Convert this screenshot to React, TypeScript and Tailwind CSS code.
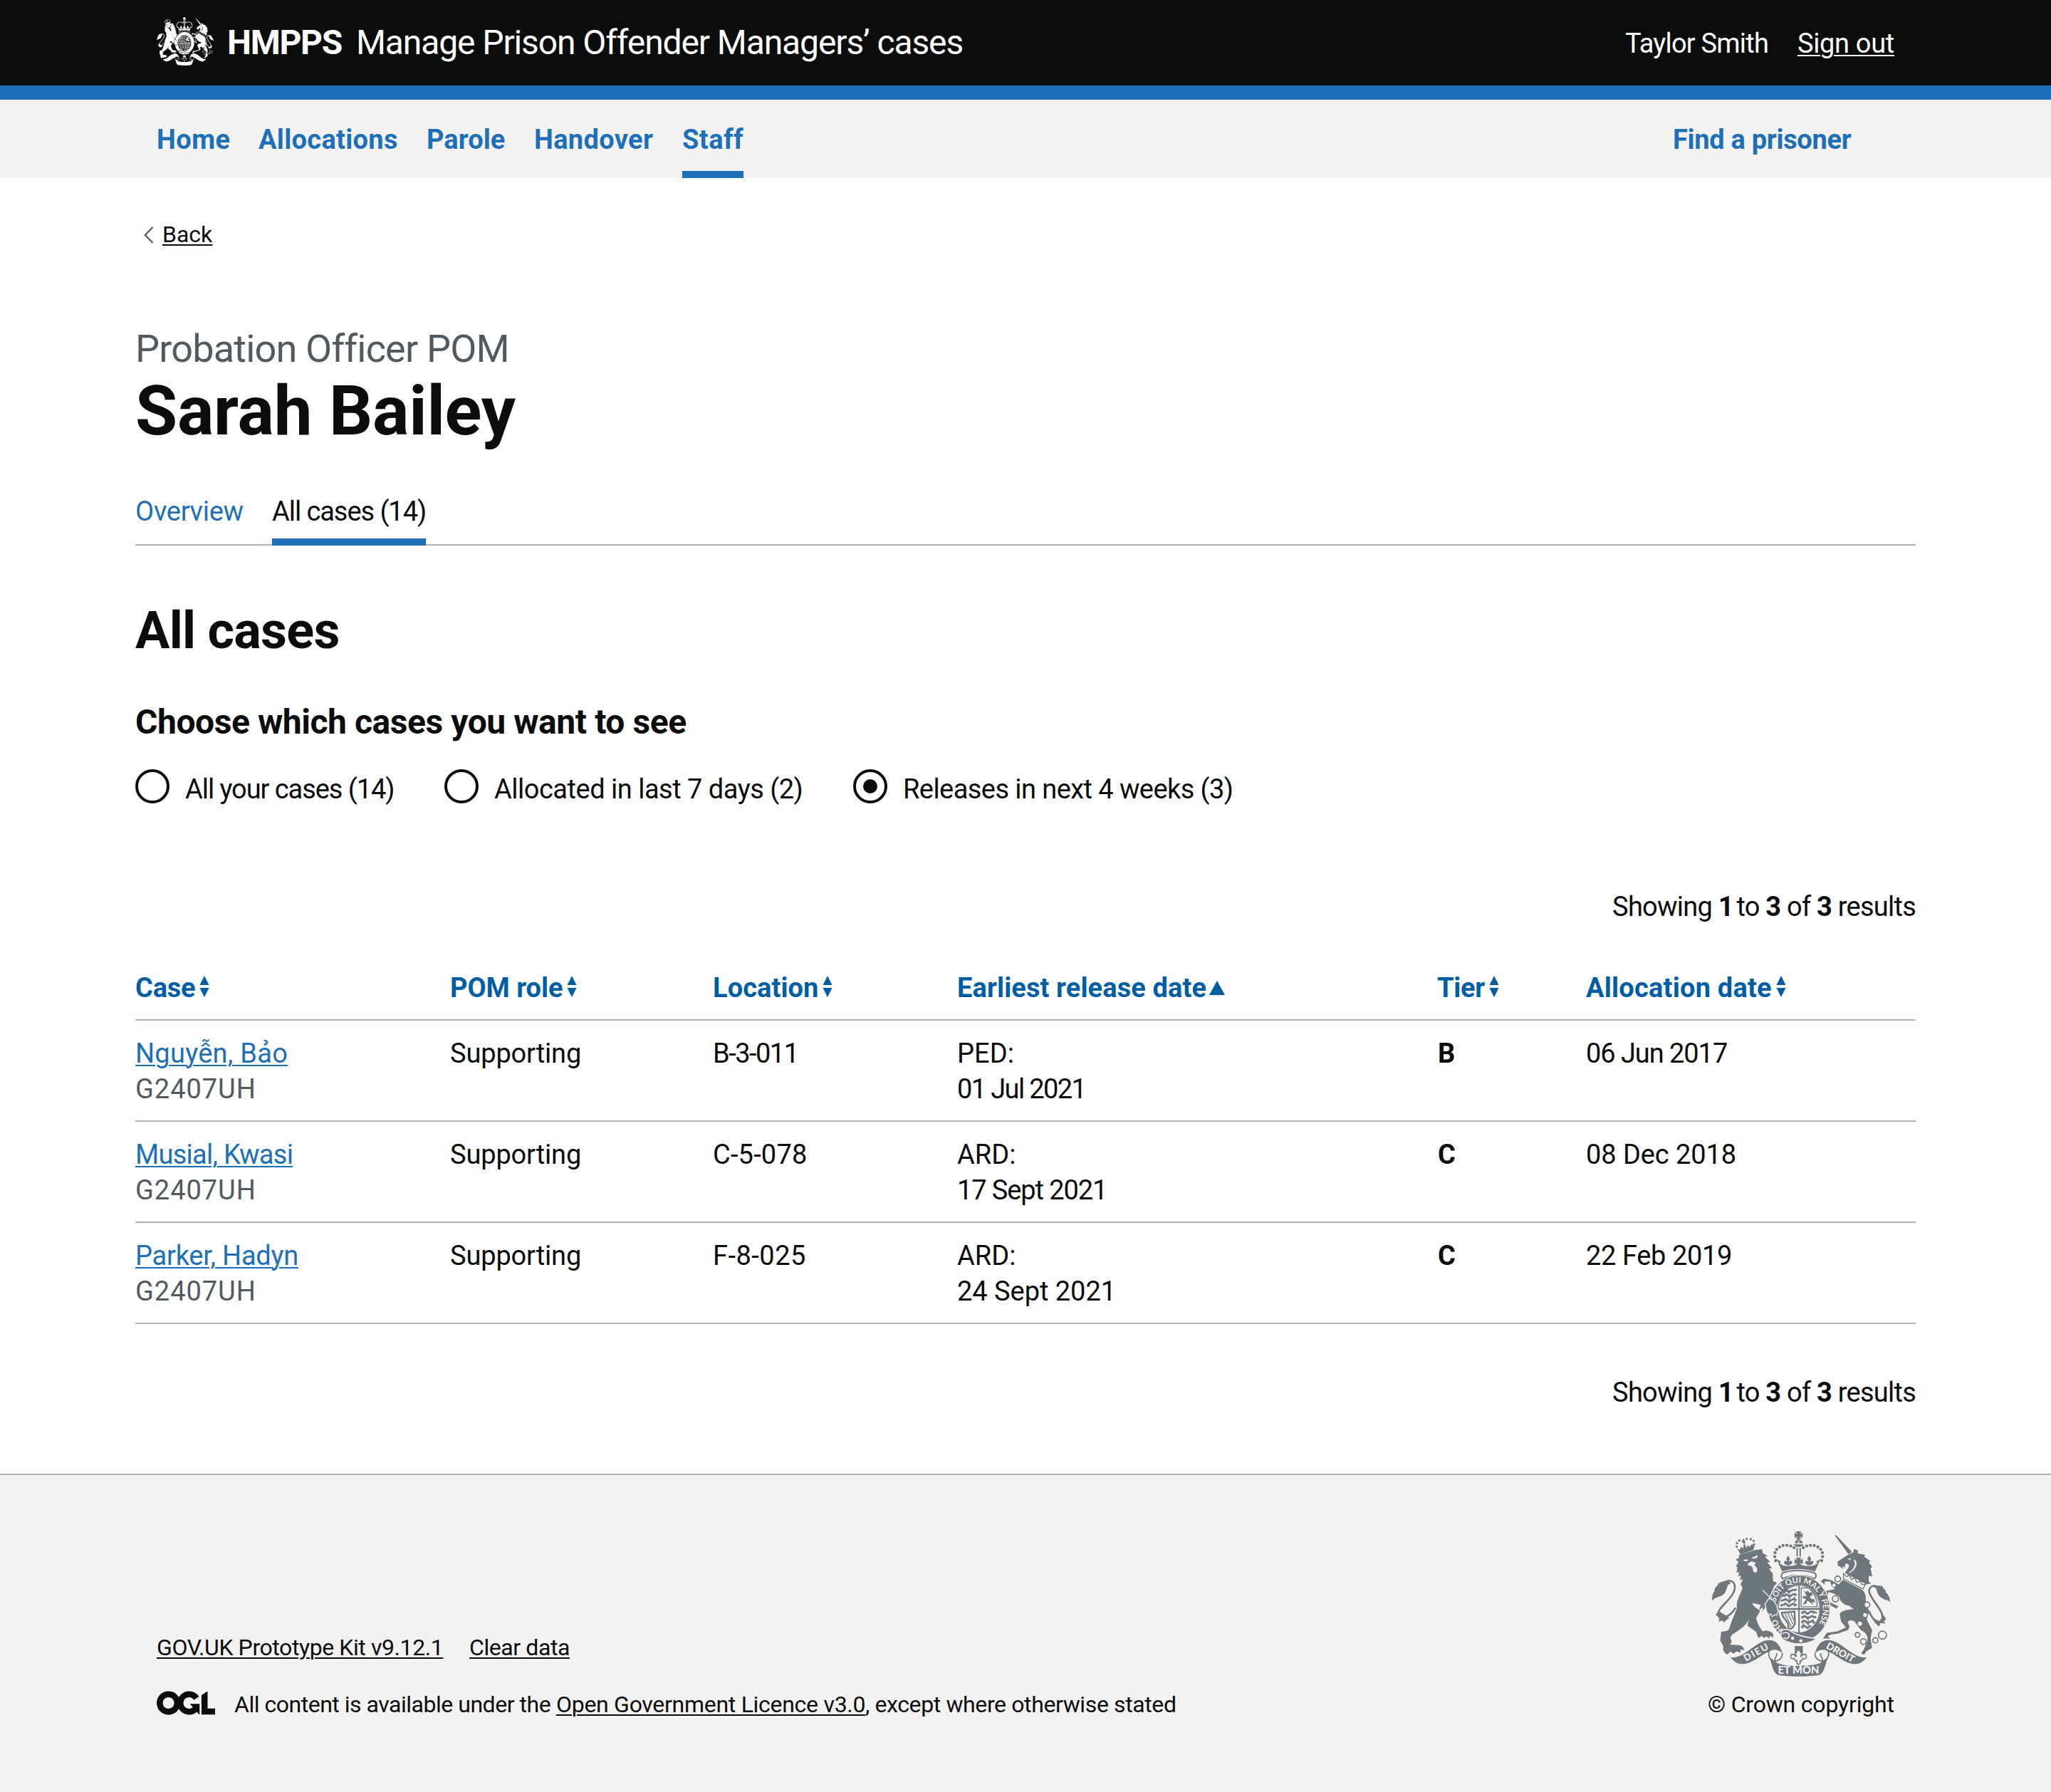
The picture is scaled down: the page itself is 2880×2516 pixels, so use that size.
import React from 'react';

function RoyalArms({ fg, bg, motto, className }: { fg: string; bg: string; motto: boolean; className: string }) {
  const archBeads = [
    [341, 184], [337, 167], [338, 150], [345, 136], [357, 126], [372, 120], [388, 119], [404, 122], [418, 129],
  ];
  const lionCrownBeads = [[177, 125], [178, 110], [188, 99], [219, 92], [236, 93], [248, 100], [250, 115]];
  const bezants = [[602, 261, 12], [592, 345, 13], [725, 370, 12], [685, 497, 10], [710, 525, 12], [760, 520, 11], [790, 498, 17]];
  return (
    <svg viewBox="70 57 755 616" preserveAspectRatio="none" className={className} fill={fg}>
      {/* central crown */}
      <path d="M425 60H449L442 72L454 65V88L442 81L448 92H426L432 81L420 88V65L432 72Z" />
      <path d="M433 92H441V98H433ZM422 110C422 100 430 96 435 95V110ZM440 95C448 97 455 102 455 110H440ZM417 115H458C454 130 421 130 417 115Z" />
      {archBeads.map(([x, y]) => (
        <g key={`${x}-${y}`}>
          <circle cx={x} cy={y} r="6.5" />
          <circle cx={875 - x} cy={y} r="6.5" />
        </g>
      ))}
      <path d="M428 130H434V166H428ZM441 130H447V166H441Z" />
      <path d="M426 171H449L442 183L455 176V198L442 192L450 204H425L432 192L420 198V176L432 183Z" />
      <path d="M393 162L401 176L396 188L408 184L411 194L400 203H386L375 194L379 184L390 188L385 176ZM482 162L490 176L485 188L497 184L500 194L489 203H475L464 194L468 184L479 188L474 176Z" />
      <path d="M346 178L362 186L358 195L372 204C385 208 400 205 412 206C430 200 445 200 462 206C480 205 490 208 502 204L516 195L512 186L528 178L517 206L506 230C470 216 404 216 368 230L357 206Z" />
      <path d="M370 236C405 222 470 222 505 236C515 245 510 256 503 260C465 242 410 242 371 260C364 256 361 245 370 236Z" fill={bg} stroke={fg} strokeWidth="6" />

      {/* lion */}
      {lionCrownBeads.map(([x, y]) => (
        <circle key={`${x}-${y}`} cx={x} cy={y} r="5" />
      ))}
      <path d="M179 132L190 138L196 124L204 134L207 112L198 104L205 89L213 103L210 112L218 130L224 118L230 127L240 114L252 122L246 140L192 156Z" />
      <path d="M189 158L258 138L285 136L286 152L306 163L296 168L317 188L306 192L325 215L313 218L328 238L330 270L347 276L334 292L322 322L313 346L330 352L343 374L349 396L344 412L326 418L322 404L316 414L306 402L301 378L284 398L288 380L270 392L278 370L242 362C246 378 262 384 276 396L259 425C262 446 270 460 286 482C300 476 322 480 331 494L330 508L316 500L316 512L300 503L292 510L282 502L268 510L258 484L222 458L228 430C222 452 192 474 158 496L150 508L156 526L148 538L180 540C196 538 208 548 208 562L194 558L192 572L176 566L164 576L150 568L138 580C122 572 118 562 121 546L107 520L112 484C126 480 140 484 145 470L160 428L178 384C172 352 196 322 201 298L193 282L203 262L190 266L195 246L183 250L187 232L176 234L180 212L174 208L184 190L172 176L184 176Z" />
      <path d="M204 182L220 177L226 184L211 187ZM240 172L266 160L262 172L246 176ZM228 192L240 187L258 193L250 202L244 200C262 208 268 222 260 232C252 238 244 230 244 214C240 204 232 206 222 202Z" fill={bg} />
      <path d="M286 308L314 336L338 354" stroke={bg} strokeWidth="4" fill="none" />
      <path d="M172 382C152 420 112 434 100 412C90 382 172 342 169 292C166 266 140 264 128 276" fill="none" stroke={fg} strokeWidth="8" />
      <path d="M152 280C136 262 118 272 98 280C102 290 78 298 84 312C72 326 74 340 72 354C82 340 92 342 106 334C128 330 134 304 140 286ZM88 410L104 398L146 424L122 444L116 436L100 440L104 428Z" />

      {/* unicorn */}
      <path d="M588 75L597 78L662 147L647 157Z" />
      <path d="M601 188L626 172L640 162L668 149L670 134L686 140L686 153L720 160L712 166L740 186L732 190L747 210L740 216L748 252L738 246L732 252L732 270L742 280L722 284L632 236L644 218C654 204 648 194 634 196L632 214L622 206L625 220L610 208L602 206Z" />
      <path d="M642 177L658 172L654 180ZM668 180C682 196 668 224 648 234L652 237C678 222 688 196 676 182Z" fill={bg} />
      <path d="M626 238L640 252L650 244L660 264L673 256L682 276L697 270L703 284L718 284L708 304L626 260Z" fill={bg} stroke={fg} strokeWidth="4" />
      <path d="M624 264L706 308C728 330 716 352 722 364L734 398L724 432L747 478L740 510L746 552L722 566L714 580L700 576L712 558L724 528C736 500 712 482 700 478L672 440C654 430 634 436 652 460L646 476L600 492L572 496L560 504L572 512L540 512L556 488L600 482L636 466L616 440L610 408C616 396 640 390 668 388L650 374C626 372 610 354 608 336L584 322L562 316L560 344L574 362L606 376L596 386L574 374L548 356L552 312L590 304L576 290L570 272L546 272L548 286L530 270L544 260L574 266L606 284Z" />
      {bezants.map(([x, y, r]) => (
        <circle key={`${x}-${y}`} cx={x} cy={y} r={r} fill={bg} stroke={fg} strokeWidth="5" />
      ))}
      <circle cx="586" cy="288" r="7" fill={bg} />
      <circle cx="717" cy="413" r="8" fill={bg} />
      <circle cx="695" cy="450" r="9" fill={bg} />
      <path d="M734 396C746 436 786 460 791 430C792 384 734 344 734 312C735 292 752 286 768 294" fill="none" stroke={fg} strokeWidth="8" />
      <path d="M750 292C776 284 788 294 790 290C790 302 808 308 804 318C818 330 822 344 822 360C812 346 800 352 788 342C768 332 768 310 762 300ZM748 430L778 438L794 412L806 432L796 438L802 450L782 446L776 462L760 448Z" />

      {/* garter and shield */}
      <ellipse cx="439" cy="388" rx="133" ry="144" fill={bg} />
      <ellipse cx="439" cy="385" rx="109" ry="119" fill="none" stroke={fg} strokeWidth="38" />
      <ellipse cx="439" cy="388" rx="88" ry="100" fill={bg} stroke={fg} strokeWidth="4" />
      <path d="M436 290H442V488H436ZM352 384H527V391H352Z" />
      <path d="M374 318L388 308L396 318L410 308L430 306M366 334L386 326L400 336L412 326L430 328M362 354L384 346L396 356L414 346L430 350M360 374L384 366L396 376L414 366L430 372" fill="none" stroke={fg} strokeWidth="8" />
      <path d="M380 312V378M398 308V378M420 304V378" fill="none" stroke={fg} strokeWidth="5" strokeDasharray="9 7" />
      <path d="M448 299H478C502 314 514 344 516 378H448Z" fill="none" stroke={fg} strokeWidth="4" />
      <path d="M458 308L468 316L476 310L484 320L494 316L496 330L486 334L488 344L504 348L506 362L494 356L498 370L484 358L474 352L470 364L456 370L462 356L470 346L454 342L456 332L472 336L466 324Z" />
      <path d="M366 404L420 398L422 448C414 470 404 474 394 470C400 440 370 430 366 404Z" fill="none" stroke={fg} strokeWidth="7" />
      <path d="M380 408L406 462M392 406L414 452M404 404L418 436" stroke={fg} strokeWidth="4" />
      <path d="M448 404L462 398L474 408L490 398L514 404M448 424L464 418L476 428L492 418L512 424M448 444L464 438L476 448L492 438L506 446M448 464L462 458L474 468L490 458" fill="none" stroke={fg} strokeWidth="8" />
      <path d="M456 400V470M478 402V470M498 398V450" fill="none" stroke={fg} strokeWidth="5" strokeDasharray="9 7" />
      <path id={motto ? 'garter-path' : undefined} d="M373 473A101 111 0 1 1 503 473" fill="none" />
      {motto && (
        <text dx="0 0 62" fill={bg} fontFamily="Lato, sans-serif" fontWeight="700" fontSize="34">
          <textPath href="#garter-path">HO SOIT QUI MAL Y PENSE</textPath>
        </text>
      )}
      <path d="M296 366L313 342L332 352L345 374L351 396L346 414L336 412L326 420L320 408L312 414L302 398Z" stroke={bg} strokeWidth="4" />
      <path d="M364 486C364 474 390 468 404 480C420 494 460 508 514 512C490 532 430 548 376 520C362 512 360 496 364 486Z" stroke={bg} strokeWidth="5" />
      <path d="M370 492C382 482 396 488 398 498C396 514 382 516 374 508" fill="none" stroke={bg} strokeWidth="5" />
      <circle cx="412" cy="511" r="7" fill={bg} />
      <circle cx="447" cy="522" r="7" fill={bg} />

      {/* pendant and ribbon */}
      <path d="M421 544H455V574H421Z" />
      <path d="M437 556L450 576L446 590C456 574 470 576 470 588C470 598 460 600 456 596L450 606H444V616L437 622L430 616V606H424L418 596C412 600 404 598 404 588C404 576 418 574 428 590L424 576Z" fill={bg} stroke={fg} strokeWidth="5" />
      <path d="M150 592C204 598 240 540 296 521C334 512 356 530 369 574C350 556 326 556 314 568C284 576 244 620 200 620C180 620 166 610 150 592Z" />
      <path d="M725 592C671 598 635 540 579 521C541 512 519 530 506 574C525 556 549 556 561 568C591 576 631 620 675 620C695 620 709 610 725 592Z" />
      <path d="M313 568C306 590 322 604 344 612M368 572C372 590 358 608 338 606C334 590 350 590 344 574M562 568C569 590 553 604 531 612M507 572C503 590 517 608 537 606C541 590 525 590 531 574" fill="none" stroke={fg} strokeWidth="5" />
      <path d="M312 590C330 616 370 628 437 628C504 628 545 616 563 590C548 614 550 656 522 667C470 674 405 674 353 667C325 656 327 614 312 590Z" />
      {motto && (
        <g fill={bg} fontFamily="Lato, sans-serif" fontWeight="900" fontSize="40" textAnchor="middle">
          <text transform="translate(264 583) rotate(-29)" textLength="112">DIEU</text>
          <text x="437" y="662" fontSize="44" textLength="174" lengthAdjust="spacingAndGlyphs">ET MON</text>
          <text transform="translate(607 583) rotate(29)" textLength="130" lengthAdjust="spacingAndGlyphs">DROIT</text>
        </g>
      )}
    </svg>
  );
}

function SortIcon({ direction }: { direction: 'none' | 'ascending' }) {
  if (direction === 'ascending') {
    return (
      <svg viewBox="0 0 22 20" className="mt-[15px] ml-[4px] h-[20px] w-[22px] shrink-0" fill="#005ea5">
        <path d="M11 0L22 20H0Z" />
      </svg>
    );
  }
  return (
    <svg viewBox="0 0 14 30" className="mt-[8px] ml-[6px] h-[30px] w-[14px] shrink-0" fill="#005ea5">
      <path d="M7 0L13.5 13H0.5ZM7 30L13.5 17H0.5Z" />
    </svg>
  );
}

const navItems = [
  { label: 'Home', size: 'w-[103px] tracking-[0.012em]' },
  { label: 'Allocations', size: 'w-[196px] tracking-[0.008em]' },
  { label: 'Parole', size: 'w-[111px] tracking-[0.002em]' },
  { label: 'Handover', size: 'w-[168px] tracking-[0.009em]' },
  { label: 'Staff', size: 'w-[86px] tracking-[0.012em]', current: true },
];

const filters = [
  { label: 'All your cases (14)', size: 'w-[364px] mr-[70px] tracking-[-0.028em]' },
  { label: 'Allocated in last 7 days (2)', size: 'w-[504px] mr-[70px] tracking-[-0.013em]' },
  { label: 'Releases in next 4 weeks (3)', size: 'w-[540px] tracking-[-0.015em]', checked: true },
];

const columns = [
  { label: 'Case', tracking: 'tracking-[-0.006em]' },
  { label: 'POM role', tracking: 'tracking-[-0.001em]' },
  { label: 'Location', tracking: 'tracking-[0.002em]' },
  { label: 'Earliest release date', tracking: 'tracking-[0.003em]', ascending: true },
  { label: 'Tier', tracking: 'tracking-[-0.008em]' },
  { label: 'Allocation date', tracking: 'tracking-[0.006em]' },
];

const rows = [
  {
    name: 'Nguyễn, Bảo', nameTracking: 'tracking-[0.007em]', location: 'B-3-011', locTracking: 'tracking-[-0.04em]',
    type: 'PED:', date: '01 Jul 2021', dateTracking: 'tracking-[-0.043em]', tier: 'B', allocated: '06 Jun 2017', allocTracking: 'tracking-[-0.028em]',
  },
  {
    name: 'Musial, Kwasi', nameTracking: 'tracking-[-0.019em]', location: 'C-5-078', locTracking: 'tracking-[0.005em]',
    type: 'ARD:', date: '17 Sept 2021', dateTracking: 'tracking-[-0.029em]', tier: 'C', allocated: '08 Dec 2018', allocTracking: 'tracking-[-0.002em]',
  },
  {
    name: 'Parker, Hadyn', nameTracking: 'tracking-[-0.006em]', location: 'F-8-025', locTracking: 'tracking-[0.013em]',
    type: 'ARD:', date: '24 Sept 2021', dateTracking: 'tracking-[-0.001em]', tier: 'C', allocated: '22 Feb 2019', allocTracking: 'tracking-[-0.01em]',
  },
];

function Showing({ className }: { className: string }) {
  return (
    <p className={`text-right leading-[50px] tracking-[-0.02em] ${className}`}>
      Showing <b className="mr-[-4px]">1</b> to <b>3</b> of <b>3</b> results
    </p>
  );
}

const link = 'underline decoration-2 underline-offset-[3px]';
const gridCols = 'grid grid-cols-[442px_369px_343px_674px_209px_463px] border-b-2 border-[#b1b4b6] pt-[21px] pb-[19px]';

export default function App() {
  return (
    <div className="flex min-h-[2516px] w-full flex-col bg-white font-['Roboto',sans-serif] text-[38px] leading-[50px] whitespace-nowrap text-[#0b0c0c]">
      <header className="h-[140px] border-b-[20px] border-[#1d70b8] bg-[#0b0c0c] px-[220px] text-white">
        <div className="flex items-start">
          <RoyalArms fg="#ffffff" bg="#0b0c0c" motto={false} className="mt-[24px] h-[68px] w-[80px]" />
          <span className="mt-[30px] ml-[19px] w-[181px] text-[48px] leading-[60px] font-bold tracking-[-0.026em]">HMPPS</span>
          <span className="mt-[30px] text-[48px] leading-[60px] tracking-[-0.023em]">Manage Prison Offender Managers’ cases</span>
          <span className="mt-[36px] ml-auto w-[242px] tracking-[-0.021em]">Taylor Smith</span>
          <a className={`mt-[36px] w-[136px] tracking-[-0.009em] ${link}`}>Sign out</a>
        </div>
      </header>

      <nav className="flex h-[110px] gap-[40px] bg-[#f3f2f1] pr-[280px] pl-[220px] font-bold text-[#1d70b8]">
        {navItems.map((item) => (
          <a key={item.label} className={`pt-[31px] ${item.size} ${item.current ? 'border-b-[10px] border-[#1d70b8]' : ''}`}>
            {item.label}
          </a>
        ))}
        <a className="ml-auto w-[251px] pt-[31px] tracking-[-0.008em]">Find a prisoner</a>
      </nav>

      <main className="flex flex-col px-[190px]">
        <div className="mt-[59px] flex text-[32px] leading-[40px]">
          <svg viewBox="0 0 14 24" className="mt-[9px] ml-[12px] h-[24px] w-[14px]" fill="none" stroke="#505a5f" strokeWidth="2.2">
            <path d="M12.5 1L1.8 12L12.5 23" />
          </svg>
          <a className={`ml-[12px] ${link}`}>Back</a>
        </div>
        <p className="mt-[111px] text-[54px] leading-[60px] tracking-[-0.015em] text-[#505a5f]">Probation Officer POM</p>
        <h1 className="mt-[7px] text-[96px] leading-[100px] font-bold tracking-[-0.002em]">Sarah Bailey</h1>

        <div className="mt-[65px] flex h-[74px] gap-[40px] border-b-2 border-[#b1b4b6]">
          <a className="w-[152px] pt-px tracking-[-0.007em] text-[#1d70b8]">Overview</a>
          <a className="h-[74px] w-[216px] border-b-[10px] border-[#1d70b8] pt-px tracking-[-0.028em]">All cases (14)</a>
        </div>

        <h2 className="mt-[80px] text-[72px] leading-[80px] font-bold tracking-[-0.01em]">All cases</h2>
        <h3 className="mt-[58px] text-[48px] leading-[60px] font-bold tracking-[-0.009em]">Choose which cases you want to see</h3>

        <div className="mt-[36px] flex h-[48px]">
          {filters.map((f) => (
            <label key={f.label} className={`flex items-start gap-[22px] ${f.size}`}>
              <span className="flex size-[48px] shrink-0 items-center justify-center rounded-full border-4 border-[#0b0c0c]">
                {f.checked && <span className="size-[20px] rounded-full bg-[#0b0c0c]" />}
              </span>
              <span className="pt-[3px]">{f.label}</span>
            </label>
          ))}
        </div>

        <Showing className="mt-[120px]" />

        <div className="mt-[43px]">
          <div className={gridCols}>
            {columns.map((c) => (
              <div key={c.label} className={`flex items-start font-bold text-[#005ea5] ${c.tracking}`}>
                {c.label}
                <SortIcon direction={c.ascending ? 'ascending' : 'none'} />
              </div>
            ))}
          </div>
          {rows.map((r) => (
            <div key={r.name} className={gridCols}>
              <div>
                <a className={`text-[#1d70b8] ${link} ${r.nameTracking}`}>{r.name}</a>
                <div className="tracking-[0.025em] text-[#505a5f]">G2407UH</div>
              </div>
              <div className="tracking-[-0.004em]">Supporting</div>
              <div className={r.locTracking}>{r.location}</div>
              <div>
                <div className="tracking-[0.002em]">{r.type}</div>
                <div className={r.dateTracking}>{r.date}</div>
              </div>
              <div className="pl-px font-bold">{r.tier}</div>
              <div className={r.allocTracking}>{r.allocated}</div>
            </div>
          ))}
        </div>

        <Showing className="mt-[71px]" />
      </main>

      <footer className="mt-[89px] flex flex-1 items-start justify-between border-t-2 border-[#b1b4b6] bg-[#f3f2f1] px-[220px] text-[32px] leading-[40px]">
        <div className="mt-[222px]">
          <div className="flex">
            <a className={`mr-[37px] w-[402px] tracking-[-0.013em] ${link}`}>GOV.UK Prototype Kit v9.12.1</a>
            <a className={`tracking-[-0.013em] ${link}`}>Clear data</a>
          </div>
          <div className="mt-[40px] flex">
            <svg viewBox="0 0 483.2 195.7" className="mt-[1px] mr-[27px] h-[34px] w-[82px]" fill="#0b0c0c">
              <path d="M421.5 142.8V.1l-50.7 32.3v161.1h112.4v-50.7zm-122.3-9.6A47.12 47.12 0 0 1 221 97.8c0-26 21.1-47.1 47.1-47.1 16.7 0 31.4 8.7 39.7 21.8l42.7-27.2A97.63 97.63 0 0 0 268.1 0c-36.5 0-68.3 20.1-85.1 49.7A98 98 0 0 0 97.8 0C43.9 0 0 43.9 0 97.8s43.9 97.8 97.8 97.8c36.5 0 68.3-20.1 85.1-49.7a97.76 97.76 0 0 0 149.6 25.4l19.4 22.2h3v-87.8h-80l24.3 27.5zM97.8 145c-26 0-47.1-21.1-47.1-47.1s21.1-47.1 47.1-47.1 47.1 21.1 47.1 47.1S123.8 145 97.8 145" />
            </svg>
            <span className="w-[452px] tracking-[-0.015em]">All content is available under the</span>
            <a className={`w-[434px] tracking-[-0.009em] ${link}`}>Open Government Licence v3.0</a>
            <span className="tracking-[-0.012em]">, except where otherwise stated</span>
          </div>
        </div>
        <div className="mt-[78px] w-[262px]">
          <RoyalArms fg="#6f777b" bg="#f3f2f1" motto className="ml-[5px] h-[205px] w-[252px]" />
          <div className="mt-[19px] tracking-[-0.006em]">© Crown copyright</div>
        </div>
      </footer>
    </div>
  );
}
